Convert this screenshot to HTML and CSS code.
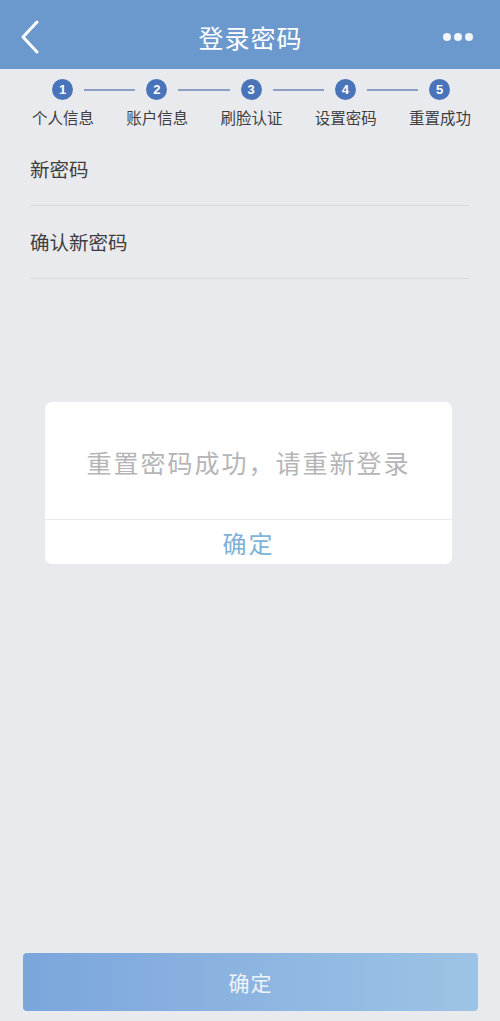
FILE: index.html
```html
<!DOCTYPE html>
<html lang="zh-CN">
<head>
<meta charset="utf-8">
<title>登录密码</title>
<link rel="stylesheet" href="styles.css">
</head>
<body>
<div class="page">
  <header class="nav">
    <span class="nav-back">
      <svg width="20" height="34" viewBox="0 0 20 34"><path d="M17 2 L3 17 L17 32" fill="none" stroke="#fff" stroke-width="3" stroke-linecap="round" stroke-linejoin="round"/></svg>
    </span>
    <h1 class="nav-title">登录密码</h1>
    <span class="nav-more"><i></i><i></i><i></i></span>
  </header>

  <div class="steps">
    <div class="step-track">
      <span class="step-dot">1</span><span class="step-line"></span>
      <span class="step-dot">2</span><span class="step-line"></span>
      <span class="step-dot">3</span><span class="step-line"></span>
      <span class="step-dot">4</span><span class="step-line"></span>
      <span class="step-dot">5</span>
    </div>
    <div class="step-labels">
      <span>个人信息</span>
      <span>账户信息</span>
      <span>刷脸认证</span>
      <span>设置密码</span>
      <span>重置成功</span>
    </div>
  </div>

  <div class="form">
    <div class="form-row">新密码</div>
    <div class="form-row">确认新密码</div>
  </div>

  <div class="spacer"></div>

  <button class="submit">确定</button>

  <div class="dialog">
    <div class="dialog-msg">重置密码成功，请重新登录</div>
    <div class="dialog-btn">确定</div>
  </div>
</div>
</body>
</html>
```

FILE: styles.css
```css
* { box-sizing: border-box; margin: 0; padding: 0; }
html, body { width: 500px; height: 1021px; }
body {
  background: #e9eaee;
  font-family: "Noto Sans CJK SC", "Noto Sans", sans-serif;
  overflow: hidden;
}
.page {
  position: relative;
  height: 1021px;
  display: flex;
  flex-direction: column;
}
.nav {
  height: 69px;
  background: #6b98cd;
  display: flex;
  align-items: center;
  justify-content: space-between;
  padding: 0 27px 0 20px;
}
.nav-back { width: 20px; height: 34px; display: flex; margin-top: 4px; }
.nav-title {
  font-size: 25px;
  font-weight: 400;
  color: #fff;
  letter-spacing: 1px;
  margin-left: 18px;
  margin-top: 4px;
}
.nav-more { display: flex; gap: 3px; align-items: center; margin-top: 4px; }
.nav-more i {
  display: block;
  width: 8px; height: 8px;
  border-radius: 50%;
  background: #f2f5fa;
}
.steps { padding-top: 10px; }
.step-track {
  display: flex;
  align-items: center;
  padding: 0 50px 0 52px;
  height: 21px;
}
.step-dot {
  width: 21px; height: 21px;
  border-radius: 50%;
  background: #4a74b9;
  color: #fff;
  font-family: "Liberation Sans", Arial, sans-serif;
  font-size: 13px;
  font-weight: 700;
  display: flex;
  align-items: center;
  justify-content: center;
  flex: none;
}
.step-line {
  flex: 1;
  height: 2px;
  margin: 0 11px;
  background: #8e9dc4;
}
.step-labels {
  display: grid;
  grid-template-columns: repeat(5, 1fr);
  padding: 0 13px 0 16px;
  margin-top: 6px;
  font-size: 15.5px;
  color: #3e3e3e;
  text-align: center;
  line-height: 22px;
}
.form { margin: 5px 31px 0 30px; }
.form-row {
  height: 73px;
  display: flex;
  align-items: center;
  font-size: 19.5px;
  color: #3e3e3e;
  border-bottom: 1px solid #d9dadf;
  padding-bottom: 1px;
}
.spacer { flex: 1; }
.submit {
  margin: 0 22px 10px 23px;
  height: 58px;
  border: none;
  border-radius: 4px;
  background: linear-gradient(90deg, #7ba6dc, #9dc3e5);
  color: #eef3fa;
  font-family: inherit;
  font-size: 21px;
  letter-spacing: 1px;
}
.dialog {
  position: absolute;
  top: 402px;
  left: 45px;
  width: 407px;
  background: #fff;
  border-radius: 7px;
  overflow: hidden;
}
.dialog-msg {
  height: 118px;
  display: flex;
  align-items: center;
  justify-content: center;
  font-size: 25px;
  letter-spacing: 2px;
  color: #b5b5b7;
  border-bottom: 1px solid #ececee;
  padding-top: 2px;
}
.dialog-btn {
  height: 44px;
  display: flex;
  align-items: center;
  justify-content: center;
  font-size: 24px;
  letter-spacing: 2px;
  color: #7eb0d9;
}
```
